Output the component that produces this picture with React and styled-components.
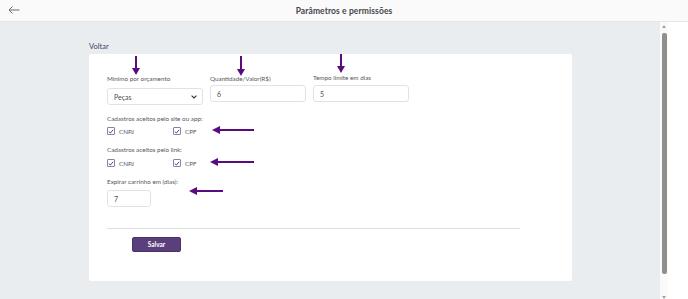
import React from 'react'
import styled, { createGlobalStyle } from 'styled-components'

const GlobalStyle = createGlobalStyle`
  html, body {
    margin: 0;
    padding: 0;
    background: #ffffff;
  }
  * {
    box-sizing: border-box;
  }
`;

const Page = styled.div`
  position: relative;
  width: 688px;
  height: 299px;
  display: flex;
  flex-direction: column;
  overflow: hidden;
  font-family: Lato, "Noto Sans", sans-serif;
`;

const Header = styled.header`
  position: relative;
  height: 22px;
  flex-shrink: 0;
  display: flex;
  align-items: center;
  justify-content: center;
  background: #fafafa;
  border-bottom: 1px solid #e4e6e8;
`;

const BackButton = styled.button`
  position: absolute;
  left: 7px;
  top: 4px;
  width: 14px;
  height: 12px;
  padding: 0;
  border: none;
  background: none;
  display: flex;
  align-items: center;
  justify-content: center;
`;

const Title = styled.h1`
  margin: 0;
  font-size: 8.5px;
  font-weight: 700;
  color: #45454c;
  letter-spacing: 0.1px;
`;

const Body = styled.div`
  flex: 1;
  display: flex;
  background: #ffffff;
`;

const Main = styled.main`
  width: 660px;
  background: #e9edf0;
  padding: 20px 0 0 89px;
`;

const BackLink = styled.a`
  display: block;
  height: 11px;
  font-size: 7.5px;
  color: #4a3d66;
  margin-bottom: 1px;
`;

const Card = styled.section`
  width: 483px;
  height: 227px;
  background: #ffffff;
  border-radius: 2px;
  padding: 21px 18px 0 18px;
`;

const FieldRow = styled.div`
  display: flex;
  gap: 7px;
  align-items: flex-start;
`;

const Field = styled.div`
  width: 96px;
  display: flex;
  flex-direction: column;
  margin-top: ${p => p.$raise ? '-1px' : '0'};
`;

const Label = styled.label`
  display: block;
  font-size: 6.3px;
  line-height: 8px;
  color: #56565c;
  margin-bottom: ${p => p.$gap || 2}px;
`;

const TextInput = styled.div`
  width: ${p => p.$w || 96}px;
  height: 17px;
  border: 1px solid #e2e2e6;
  border-radius: 3px;
  padding: 0 6px;
  display: flex;
  align-items: center;
  font-size: 7px;
  color: #4e4e55;
  margin-top: ${p => p.$offset || 0}px;
`;

const SelectBox = styled(TextInput)`
  justify-content: space-between;
  padding: 0 5px 0 6px;
`;

const Section = styled.div`
  margin-top: ${p => p.$top}px;
`;

const CheckRow = styled.div`
  display: flex;
  align-items: center;
  margin-top: ${p => p.$top || 4}px;
`;

const CheckItem = styled.div`
  width: 66px;
  display: flex;
  align-items: center;
  gap: 4px;
  font-size: 6.3px;
  color: #56565c;
`;

const Box = styled.span`
  width: 8px;
  height: 8px;
  border: 1px solid #8c7fa3;
  border-radius: 1px;
  display: flex;
  align-items: center;
  justify-content: center;
`;

const Divider = styled.hr`
  width: 413px;
  margin: 21px 0 0 0;
  border: none;
  border-top: 1px solid #dedede;
`;

const SaveButton = styled.button`
  display: block;
  margin: 8px 0 0 25px;
  width: 49px;
  height: 15px;
  padding: 0;
  border: 1px solid #4b3266;
  border-radius: 2px;
  background: #5b3f7c;
  color: #ffffff;
  font-family: inherit;
  font-size: 6.5px;
  font-weight: 700;
`;

const ScrollTrack = styled.div`
  position: relative;
  width: 8px;
  background: #fafafa;
  display: flex;
  flex-direction: column;
  align-items: center;
  padding-top: 3px;
`;

const ScrollArrow = styled.span`
  width: 0;
  height: 0;
  border-left: 2px solid transparent;
  border-right: 2px solid transparent;
  ${p => p.$down
    ? 'border-top: 3px solid #a3a3a3; margin-top: 22px;'
    : 'border-bottom: 3px solid #a3a3a3; margin-bottom: 5px;'}
`;

const ScrollThumb = styled.span`
  width: 5px;
  height: 241px;
  border-radius: 2px;
  background: #8f8f8f;
`;

const Overlay = styled.svg`
  position: absolute;
  left: 0;
  top: 0;
  pointer-events: none;
`;

const Check = () => (
  <Box>
    <svg width="6" height="5" viewBox="0 0 6 5">
      <path d="M0.8 2.6 L2.3 4 L5.2 0.8" fill="none" stroke="#5b3f7c" strokeWidth="1" />
    </svg>
  </Box>
);

const ARROW = '#5a0b80';

const DownArrow = ({ x, y1, y2 }) => (
  <g>
    <line x1={x} y1={y1} x2={x} y2={y2 - 5} stroke={ARROW} strokeWidth="2" />
    <polygon points={`${x - 4},${y2 - 7} ${x + 4},${y2 - 7} ${x},${y2}`} fill={ARROW} />
  </g>
);

const LeftArrow = ({ y, x1, x2 }) => (
  <g>
    <line x1={x1 + 5} y1={y} x2={x2} y2={y} stroke={ARROW} strokeWidth="2" />
    <polygon points={`${x1},${y} ${x1 + 8},${y - 4} ${x1 + 8},${y + 4}`} fill={ARROW} />
  </g>
);

const App = () => {
  return (
    <Page>
      <GlobalStyle />
      <Header>
        <BackButton aria-label="voltar">
          <svg width="12" height="8" viewBox="0 0 12 8">
            <path d="M11.5 4 H1 M4.5 0.5 L1 4 L4.5 7.5" fill="none" stroke="#6b6b6b" strokeWidth="1" />
          </svg>
        </BackButton>
        <Title>Parâmetros e permissões</Title>
      </Header>
      <Body>
        <Main>
          <BackLink>Voltar</BackLink>
          <Card>
            <FieldRow>
              <Field>
                <Label>Mínimo por orçamento</Label>
                <SelectBox $offset={3}>
                  <span>Peças</span>
                  <svg width="6" height="4" viewBox="0 0 6 4">
                    <path d="M0.6 0.6 L3 3 L5.4 0.6" fill="none" stroke="#333" strokeWidth="1.1" />
                  </svg>
                </SelectBox>
              </Field>
              <Field>
                <Label>Quantidade/Valor(R$)</Label>
                <TextInput>6</TextInput>
              </Field>
              <Field $raise>
                <Label $gap={3}>Tempo limite em dias</Label>
                <TextInput>5</TextInput>
              </Field>
            </FieldRow>

            <Section $top={10}>
              <Label $gap={0}>Cadastros aceitos pelo site ou app:</Label>
              <CheckRow>
                <CheckItem><Check />CNPJ</CheckItem>
                <CheckItem><Check />CPF</CheckItem>
              </CheckRow>
            </Section>

            <Section $top={11}>
              <Label $gap={0}>Cadastros aceitos pelo link:</Label>
              <CheckRow $top={5}>
                <CheckItem><Check />CNPJ</CheckItem>
                <CheckItem><Check />CPF</CheckItem>
              </CheckRow>
            </Section>

            <Section $top={11}>
              <Label $gap={4}>Expirar carrinho em (dias):</Label>
              <TextInput $w={44}>7</TextInput>
            </Section>

            <Divider />
            <SaveButton>Salvar</SaveButton>
          </Card>
        </Main>
        <ScrollTrack>
          <ScrollArrow />
          <ScrollThumb />
          <ScrollArrow $down />
        </ScrollTrack>
      </Body>

      <Overlay width="688" height="299" viewBox="0 0 688 299">
        <DownArrow x={136} y1={56} y2={75} />
        <DownArrow x={241} y1={56} y2={76} />
        <DownArrow x={341} y1={54} y2={73} />
        <LeftArrow y={130} x1={212} x2={254} />
        <LeftArrow y={162} x1={210} x2={254} />
        <LeftArrow y={191} x1={189} x2={223} />
      </Overlay>
    </Page>
  )
}

export default App
